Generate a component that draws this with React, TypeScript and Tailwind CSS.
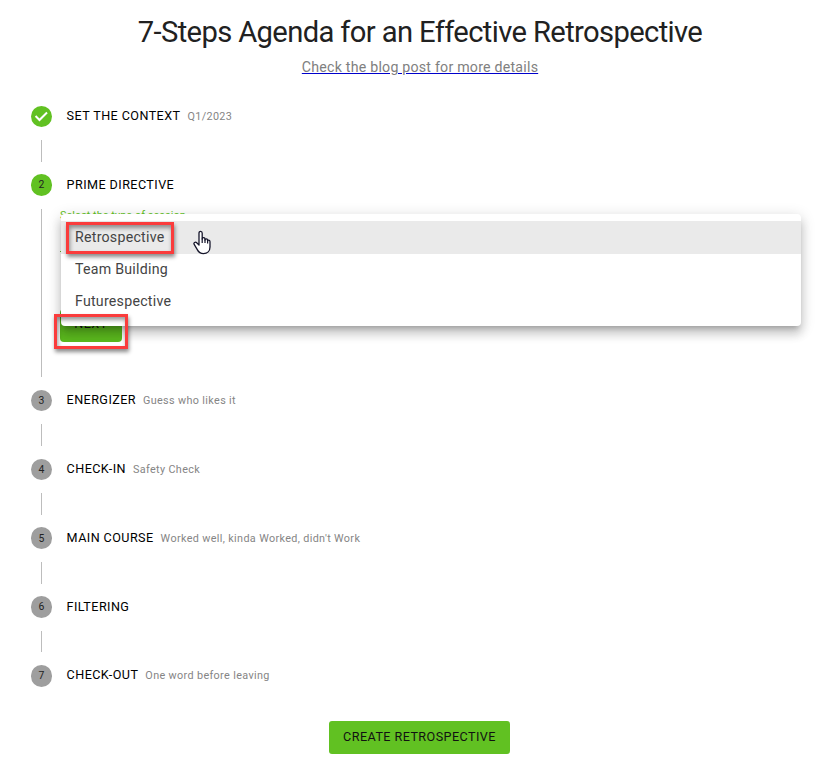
import React from "react";

type StepProps = {
  n: number;
  title: string;
  note?: string;
  state?: "done" | "active" | "idle";
};

function StepRow({ n, title, note, state = "idle" }: StepProps) {
  return (
    <div className="flex h-[21.6px] items-center">
      <div
        className={`flex h-[21.6px] w-[21px] shrink-0 items-center justify-center rounded-full text-[10.4px] leading-none text-[#222] ${
          state === "idle" ? "bg-[#9e9e9e]" : "bg-[#61c122]"
        }`}
      >
        {state === "done" ? (
          <svg viewBox="0 0 24 24" className="size-[21px] fill-white">
            <path d="M9.7 17.6l-5.3-5.3 1.6-1.6 3.7 3.7 7.8-7.8 1.6 1.6-9.4 9.4z" />
          </svg>
        ) : (
          <span className="pt-px">{n}</span>
        )}
      </div>
      <div className="ml-[14.6px] flex items-baseline whitespace-nowrap">
        <span className="text-[12.6px] leading-[18px] tracking-[0.43px] text-black">{title}</span>
        {note && (
          <span className="ml-[7px] text-[10.8px] leading-[18px] tracking-[0.36px] text-[#858585]">
            {note}
          </span>
        )}
      </div>
    </div>
  );
}

function Connector() {
  return <div className="mt-[13px] mb-[12.6px] ml-[10px] h-[21.6px] w-px bg-[#bdbdbd]" />;
}

function SessionMenu() {
  return (
    <div className="absolute top-[5px] left-[19px] w-[740px] rounded-[4px] bg-white pt-[7px] pb-[8px] text-[14.2px] tracking-[0.24px] text-[#444] shadow-[0_5px_5px_-3px_rgba(0,0,0,0.2),0_8px_10px_1px_rgba(0,0,0,0.14),0_3px_14px_2px_rgba(0,0,0,0.12)]">
      <div className="flex h-[33px] items-center bg-[#eaeaea] pl-[14px]">Retrospective</div>
      <div className="flex h-[32px] items-center pl-[14px]">Team Building</div>
      <div className="flex h-[32px] items-center pl-[14px]">Futurespective</div>
    </div>
  );
}

function Pointer() {
  return (
    <svg viewBox="0 0 18 25" className="absolute top-[21px] left-[151px] h-[25px] w-[18px]">
      <path
        d="M6 15V3.2C6 .7 9.2.7 9.2 3.2V9C9.2 7.2 12 7.3 12 9.2V10C12 8.4 14.6 8.5 14.6 10.3V11C14.6 9.7 17 9.8 17 11.7V17C17 21 14.2 23.6 10.5 23.6C7 23.6 5.5 22 4.3 19.6L1.2 14.4C.2 12.7 2.4 11.4 3.7 12.8Z"
        fill="white"
        stroke="#15152a"
        strokeWidth="1.3"
        strokeLinejoin="round"
      />
      <path d="M9.2 8.5V13M12 9.5V13M14.6 10.5V13.5" stroke="#15152a" strokeWidth="1.2" fill="none" />
    </svg>
  );
}

export default function App() {
  return (
    <div className="h-[766px] w-[838px] overflow-hidden bg-white font-['Roboto',sans-serif] text-[#212121]">
      <header className="flex flex-col items-center pt-[13px] pl-[2px]">
        <h1 className="text-[29.2px] leading-[38px] font-normal tracking-[-0.64px] whitespace-nowrap text-[#212121]">
          7-Steps Agenda for an Effective Retrospective
        </h1>
        <a className="mt-[5px] text-[14.2px] leading-[22px] tracking-[0.22px] text-[#808080] underline decoration-[#0000cc]">
          Check the blog post for more details
        </a>
      </header>
      <main className="mt-[27.6px] ml-[31px]">
        <StepRow n={1} title="SET THE CONTEXT" note="Q1/2023" state="done" />
        <Connector />
        <StepRow n={2} title="PRIME DIRECTIVE" state="active" />
        <div className="relative mt-[13px] mb-[12.9px] ml-[10px] h-[168px] border-l border-[#bdbdbd] pl-[18px]">
          <div className="flex h-[133px] flex-col">
            <span className="text-[10.8px] leading-[13px] tracking-[0.1px] text-[#61c122]">Select the type of session</span>
            <div className="mt-[29px] h-px w-[741px] bg-[#61c122]" />
            <div className="mt-auto flex h-[33px] w-[62px] items-center justify-center rounded-[4px] bg-[#5bb91e] pb-[3px] text-[12.6px] tracking-[0.5px] text-[#111]">
              NEXT
            </div>
          </div>
          <SessionMenu />
          <div className="absolute top-[13px] left-[24px] h-[32px] w-[108px] border-3 border-[#fa3c3c] shadow-[1px_3px_4px_rgba(0,0,0,0.45),inset_1px_3px_4px_rgba(0,0,0,0.4)]" />
          <div className="absolute top-[105px] left-[12px] h-[35px] w-[74px] border-3 border-[#fa3c3c] shadow-[1px_3px_4px_rgba(0,0,0,0.45),inset_1px_3px_4px_rgba(0,0,0,0.4)]" />
          <Pointer />
        </div>
        <StepRow n={3} title="ENERGIZER" note="Guess who likes it" />
        <Connector />
        <StepRow n={4} title="CHECK-IN" note="Safety Check" />
        <Connector />
        <StepRow n={5} title="MAIN COURSE" note="Worked well, kinda Worked, didn't Work" />
        <Connector />
        <StepRow n={6} title="FILTERING" />
        <Connector />
        <StepRow n={7} title="CHECK-OUT" note="One word before leaving" />
      </main>
      <button className="mt-[34.6px] ml-[329px] flex h-[33px] w-[181px] items-center justify-center rounded-[3px] bg-[#61c122] pb-px text-[12.6px] tracking-[0.44px] whitespace-nowrap text-[#111]">
        CREATE RETROSPECTIVE
      </button>
    </div>
  );
}
